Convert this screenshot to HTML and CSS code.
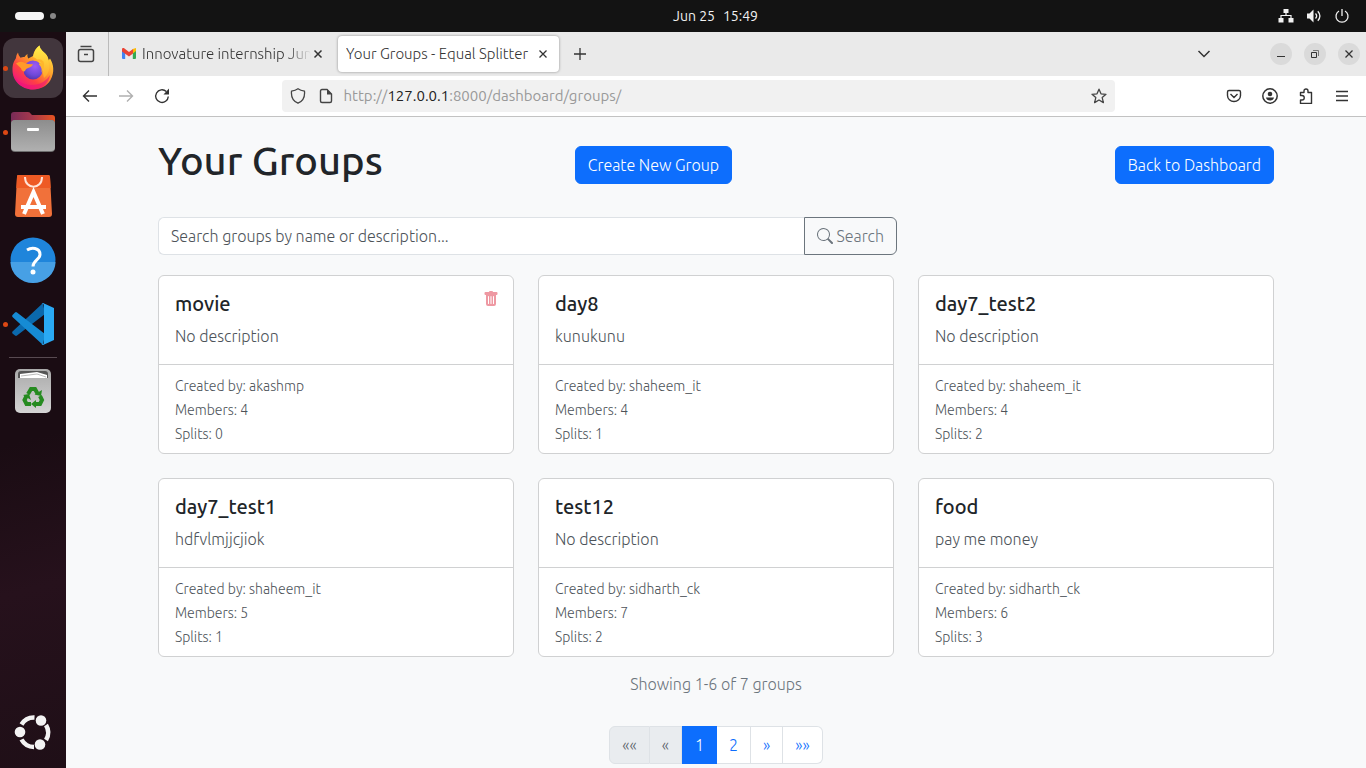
FILE: index.html
```html
<!DOCTYPE html>
<html lang="en">
<head>
<meta charset="utf-8">
<meta name="viewport" content="width=device-width, initial-scale=1">
<title>Your Groups - Equal Splitter</title>
<link rel="stylesheet" href="styles.css">
</head>
<body class="desktop">
<header class="topbar">
  <button class="workspaces" aria-label="Activities"><span class="pill"></span><span class="dot"></span></button>
  <button class="clock"><span>Jun 25</span><span>15:49</span></button>
  <button class="system" aria-label="System menu">
    <svg width="16" height="16" viewBox="0 0 16 16"><path d="M5.500 1h5v4h-5zM.5 10h5v4.500h-5zM10.500 10h5v4.500h-5z" fill="#f2f2f2"/><path d="M8 5v2.500M3 10V7.500h10V10" fill="none" stroke="#f2f2f2" stroke-width="1.200"/></svg>
    <svg width="16" height="16" viewBox="0 0 16 16"><path d="M1 5.500h2.500L7.500 1.500v13l-4-4H1z" fill="#f2f2f2"/><path d="M9.500 5.500q2.300 2.500 0 5M11.800 3.300q4.200 4.700 0 9.400" fill="none" stroke="#f2f2f2" stroke-width="1.300"/></svg>
    <svg width="16" height="16" viewBox="0 0 16 16"><path d="M5 3a6 6 0 1 0 6 0M8 1v7" fill="none" stroke="#f2f2f2" stroke-width="1.300"/></svg>
  </button>
</header>
<nav class="dock" aria-label="Dock">
  <button class="app app-active" aria-label="Firefox"><i class="running"></i>
    <svg width="48" height="48" viewBox="0 0 48 48">
      <defs>
        <linearGradient id="ff-body" x1=".85" y1=".1" x2=".2" y2=".95"><stop offset="0" stop-color="#ffe63f"/><stop offset=".4" stop-color="#ff9a2b"/><stop offset=".7" stop-color="#ff4143"/><stop offset="1" stop-color="#ef1385"/></linearGradient>
        <linearGradient id="ff-flame" x1=".5" y1="0" x2=".5" y2="1"><stop offset="0" stop-color="#fff14a"/><stop offset="1" stop-color="#ffa52a"/></linearGradient>
        <radialGradient id="ff-globe" cx=".6" cy=".3" r=".8"><stop offset="0" stop-color="#9f5cf5"/><stop offset=".6" stop-color="#6e48d8"/><stop offset="1" stop-color="#4b2fa0"/></radialGradient>
      </defs>
      <path d="M9 8.500q.2 3.200 2.500 5.200 1.900-.8 4-.6 1.300-2.200 3-3 -.6 2.300.7 4.300L24 12c1-5 3-8 6.500-10.500.5 4.500 4.500 6 7 9.500 1.500 2 1.800 3.500 2 5.500l1.500-2C44.500 20 46 28 41.500 36 38 42 31.500 45.500 24 45.500 12 45.500 3.500 36.500 3.500 26c0-5.500 1-8 3.300-11.500Q7 11 9 8.500z" fill="url(#ff-body)"/>
      <path d="M24 13c1-5 3-9 6.500-11.500.5 4.500 4.500 6 7 9.500 2.500 4 2 6 2.200 8 1.800 7-1 12-4.700 15-2-9-4-19-11-21z" fill="url(#ff-flame)"/>
      <circle cx="24" cy="26" r="9.500" fill="url(#ff-globe)"/>
      <path d="M7 19.500q4-3 8.500-.8 3 1.600 8.500 1.500c-.5 2-3 3-5.500 4-3 1-1.500 4-4.500 3q-1.500-.5-2-3z" fill="#ff9a2a"/>
      <path d="M4 28c2 8 9 13 18 13 10 0 16-5 19-10-1 9-9 14.500-17 14.500S4.500 39 4 28z" fill="#ef1278" opacity=".6"/>
      <path d="M24 17q5-2 9 2.500-3.500-1-3 1 3.500 3.500 2.500 8 4-5 2-11-3.500-4-10.500-.5z" fill="#ffb62c"/>
    </svg></button>
  <button class="app" aria-label="Files"><i class="running"></i>
    <svg width="48" height="48" viewBox="0 0 48 48">
      <defs><linearGradient id="folder" x1="0" x2="1"><stop offset="0" stop-color="#782b57"/><stop offset=".5" stop-color="#a8394c"/><stop offset="1" stop-color="#e95420"/></linearGradient><linearGradient id="drawer" x1="0" y1="0" x2="0" y2="1"><stop offset="0" stop-color="#8d8d8d"/><stop offset="1" stop-color="#b0b0b0"/></linearGradient></defs>
      <path d="M2 17V7q0-3 3-3h14q2 0 3 2l1 1h20q3 0 3 3v7H2z" fill="url(#folder)"/>
      <rect x="2" y="12" width="44" height="32" rx="4" fill="#6e6e6e"/><rect x="2" y="12" width="44" height="31" rx="4" fill="url(#drawer)"/><rect x="18" y="20" width="12" height="3" rx="1" fill="#fff"/>
    </svg></button>
  <button class="app" aria-label="App Center">
    <svg width="48" height="48" viewBox="0 0 48 48">
      <path d="M9 3h30q2 0 2 2l2 37q0 3-3 3H9q-3 0-3-3L8 5q0-2 1-2z" fill="#f1713a"/><path d="M9 3h30q2 0 2 2l.7 11H7.300L8 5q0-2 1-2z" fill="#ee5a24"/>
      <path d="M16 5c0 13 17 13 17 0" fill="none" stroke="#ffe4d8" stroke-width="2"/>
      <path d="M15 42l9.500-22L34 42M12 35h25" fill="none" stroke="#fff" stroke-width="4"/>
    </svg></button>
  <button class="app" aria-label="Help">
    <svg width="48" height="48" viewBox="0 0 48 48">
      <circle cx="24" cy="24" r="22.500" fill="#1f85db"/><path d="M1.500 26a22.500 21 0 0 0 45 0z" fill="#47a0e5"/>
      <path d="M18 14q4-2.500 8-1.500 5 1.200 5 6c0 5-7 6-7 12" fill="none" stroke="#fff" stroke-width="3"/><circle cx="24" cy="36" r="2.500" fill="#fff"/>
    </svg></button>
  <button class="app" aria-label="Visual Studio Code"><i class="running"></i>
    <svg width="48" height="48" viewBox="0 0 48 48">
      <path d="M34 3L3.500 31.500q-.8 1 0 2L6 35.500q1 .8 2 0L36 14z" fill="#0b69ad"/>
      <path d="M36 34L8 12.500q-1-.8-2 0L3.500 15q-.8 1 0 2L34 45z" fill="#168bd4"/>
      <path d="M34 3l11 5v32l-11 5q-1 0-1.500-1 2.500 1 2.500-1.500v-37q0-2.500-2.500-1.500z" fill="#2aa9f4"/>
    </svg></button>
  <hr class="dock-line">
  <button class="app" aria-label="Trash">
    <svg width="48" height="48" viewBox="0 0 48 48">
      <defs><linearGradient id="bin" x1="0" y1="0" x2="0" y2="1"><stop offset="0" stop-color="#aaa"/><stop offset="1" stop-color="#d4d4d4"/></linearGradient></defs>
      <rect x="6" y="2" width="36" height="44" rx="5" fill="url(#bin)"/>
      <path d="M9 11V7q0-3 3-3h24q3 0 3 3v4z" fill="#555"/><path d="M11 11V7l17-2 10 3v3z" fill="#fff"/><path d="M12 9l16-2 9 3" fill="none" stroke="#bbb"/>
      <g fill="none" stroke="#268b20" stroke-width="4"><path d="M19 27l3-5h4l2.500 4.500"/><path d="M31 29l2 4-2 4H26"/><path d="M22 37h-4.500l-2-4 2-4"/></g>
      <path d="M25.500 27.500l6.500 1.500 1-6zM27 33v8l-5-4zM14 28l6-1 2 6z" fill="#268b20"/>
    </svg></button>
  <button class="app app-last" aria-label="Show apps">
    <svg width="48" height="48" viewBox="0 0 48 48"><g fill="none" stroke="#f3f3f3" stroke-width="4.500"><path d="M12.500 16.500A14.500 14.500 0 0 1 25.500 9.500M37 17A14.500 14.500 0 0 1 37 32M25 39A14.500 14.500 0 0 1 12.500 31.500"/></g><g fill="#f3f3f3"><circle cx="32" cy="12.500" r="5.300"/><circle cx="11" cy="24" r="5.300"/><circle cx="31" cy="36.500" r="5.300"/></g></svg></button>
</nav>
<div class="browser">
  <div class="tabbar">
    <button class="tab-overview" aria-label="Recent browsing"><svg width="18" height="18" viewBox="0 0 18 18"><g fill="none" stroke="#444" stroke-width="1.500"><path d="M3.500 1.500h11"/><rect x="1.500" y="4.500" width="15" height="12" rx="2"/><path d="M7 9.500h4"/></g></svg></button>
    <div class="tab tab-back">
      <svg width="14" height="12" viewBox="0 0 14 12"><path d="M0 2v8q0 1 1 1h2.200V4.500L0 2z" fill="#4285f4"/><path d="M14 2v8q0 1-1 1h-2.200V4.500L14 2z" fill="#34a853"/><path d="M10.800 1L14 0v3l-3.200 2.500z" fill="#fbbc04"/><path d="M0 2.500V1.500C0 .2 1.300-.3 2.500.5L7 4 11 1v4.500L7 8.500 0 3.400z" fill="#ea4335"/></svg>
      <span class="tab-title">Innovature internship Jun</span>
      <button class="tab-close" aria-label="Close tab"><svg width="10" height="10" viewBox="0 0 10 10"><path d="M1.500 1.500l7 7M8.500 1.500l-7 7" stroke="#333" stroke-width="1.500"/></svg></button>
    </div>
    <div class="tab tab-current">
      <span class="tab-title">Your Groups - Equal Splitter</span>
      <button class="tab-close" aria-label="Close tab"><svg width="10" height="10" viewBox="0 0 10 10"><path d="M1.500 1.500l7 7M8.500 1.500l-7 7" stroke="#333" stroke-width="1.300"/></svg></button>
    </div>
    <button class="tab-new" aria-label="New tab"><svg width="14" height="14" viewBox="0 0 14 14"><path d="M7 1v12M1 7h12" stroke="#333" stroke-width="1.300"/></svg></button>
    <div class="window-controls">
      <button class="tab-list" aria-label="List all tabs"><svg width="14" height="14" viewBox="0 0 14 14"><path d="M1.500 4L7 9.500 12.500 4" fill="none" stroke="#333" stroke-width="1.500"/></svg></button>
      <button class="round" aria-label="Minimize"><svg width="10" height="10" viewBox="0 0 10 10"><path d="M1 7.500h8" stroke="#333"/></svg></button>
      <button class="round" aria-label="Restore"><svg width="10" height="10" viewBox="0 0 10 10"><path d="M1.500 3.500h5v5h-5z" fill="none" stroke="#333"/><path d="M3 1.500h5.500V7" fill="none" stroke="#777"/></svg></button>
      <button class="round" aria-label="Close"><svg width="10" height="10" viewBox="0 0 10 10"><path d="M1.500 1.500l7 7M8.500 1.500l-7 7" stroke="#333" stroke-width="1.300"/></svg></button>
    </div>
  </div>
  <div class="toolbar">
    <div class="tools">
      <button class="tool" aria-label="Back"><svg width="16" height="16" viewBox="0 0 16 16"><path d="M15 8H1.500M7 2.500L1.500 8 7 13.500" fill="none" stroke="#333" stroke-width="1.400"/></svg></button>
      <button class="tool" aria-label="Forward" disabled><svg width="16" height="16" viewBox="0 0 16 16"><path d="M1 8h13.500M9 2.500L14.500 8 9 13.500" fill="none" stroke="#b0b0b0" stroke-width="1.400"/></svg></button>
      <button class="tool" aria-label="Reload"><svg width="16" height="16" viewBox="0 0 16 16"><path d="M14.300 8.500A6.300 6.300 0 1 1 12.300 3.500" fill="none" stroke="#333" stroke-width="1.400"/><path d="M15 .5V6.500H9.500z" fill="#333"/></svg></button>
    </div>
    <div class="address">
      <button class="address-icon" aria-label="Tracking protection"><svg width="16" height="16" viewBox="0 0 16 16"><path d="M8 .8c2 1.400 4 2 6.500 2.400.5 5.300-1.500 10-6.500 12C3 13.200 1 8.500 1.500 3.200 4 2.800 6 2.200 8 .8z" fill="none" stroke="#444" stroke-width="1.300"/></svg></button>
      <button class="address-icon" aria-label="Site information"><svg width="16" height="16" viewBox="0 0 16 16"><path d="M4 1.500h5L13.500 6v7q0 1.500-1.500 1.500H4Q2.500 14.500 2.500 13V3Q2.500 1.500 4 1.500z" fill="none" stroke="#444" stroke-width="1.400"/><path d="M9 1v5.500h5z" fill="#444"/></svg></button>
      <div class="address-text" role="textbox" tabindex="0" aria-label="Address">http://<b>127.0.0.1</b>:8000/dashboard/groups/</div>
      <button class="address-icon" aria-label="Bookmark"><svg width="16" height="16" viewBox="0 0 16 16"><path d="M8 1.200l2 4.600 5 .5-3.800 3.300 1.200 5L8 12l-4.400 2.600 1.200-5L1 6.300l5-.5z" fill="none" stroke="#444" stroke-width="1.300" stroke-linejoin="round"/></svg></button>
    </div>
    <div class="tools">
      <button class="tool" aria-label="Pocket"><svg width="16" height="16" viewBox="0 0 16 16"><path d="M3 2.500h10q1.500 0 1.500 1.500v3.500a6.500 6 0 0 1-13 0V4Q1.500 2.500 3 2.500zM4.500 6L8 9.500 11.500 6" fill="none" stroke="#333" stroke-width="1.400"/></svg></button>
      <button class="tool" aria-label="Account"><svg width="16" height="16" viewBox="0 0 16 16"><circle cx="8" cy="8" r="7.200" fill="none" stroke="#333" stroke-width="1.500"/><circle cx="8" cy="6" r="2.300" fill="#333"/><path d="M4 9.500h8q-.5 3-4 3t-4-3z" fill="#333"/></svg></button>
      <button class="tool" aria-label="Extensions"><svg width="16" height="16" viewBox="0 0 16 16"><path d="M2.500 7.500V4.500H6V3a2 2 0 0 1 4 0v1.500h3.500v11h-11V12H4a2.200 2.200 0 0 0 0-4.500z" fill="none" stroke="#333" stroke-width="1.400" stroke-linejoin="round"/></svg></button>
      <button class="tool" aria-label="Menu"><svg width="16" height="16" viewBox="0 0 16 16"><path d="M2 3.500h12M2 8h12M2 12.500h12" stroke="#333" stroke-width="1.300"/></svg></button>
    </div>
  </div>
  <main class="page">
    <div class="container">
      <div class="page-head">
        <div class="page-head-main"><h1>Your Groups</h1><a class="btn" href="#create">Create New Group</a></div>
        <a class="btn" href="#dashboard">Back to Dashboard</a>
      </div>
      <form class="search">
        <input class="search-input" type="text" aria-label="Search groups" placeholder="Search groups by name or description...">
        <button class="search-button" type="button"><svg width="16" height="16" viewBox="0 0 16 16" fill="currentColor"><path d="M11.742 10.344a6.500 6.500 0 1 0-1.397 1.398h-.001q.044.06.098.115l3.850 3.850a1 1 0 0 0 1.415-1.414l-3.850-3.850a1 1 0 0 0-.115-.1zM12 6.500a5.500 5.500 0 1 1-11 0 5.500 5.500 0 0 1 11 0"/></svg>Search</button>
      </form>
      <div class="cards">
        <article class="card"><div class="card-body"><h2>movie</h2><p>No description</p><button class="delete" aria-label="Delete group"><svg width="16" height="16" viewBox="0 0 16 16" fill="currentColor"><path d="M2.500 1a1 1 0 0 0-1 1v1a1 1 0 0 0 1 1H3v9a2 2 0 0 0 2 2h6a2 2 0 0 0 2-2V4h.5a1 1 0 0 0 1-1V2a1 1 0 0 0-1-1H10a1 1 0 0 0-1-1H7a1 1 0 0 0-1 1zm3 4a.5.5 0 0 1 .5.5v7a.5.5 0 0 1-1 0v-7a.5.5 0 0 1 .5-.5M8 5a.5.5 0 0 1 .5.5v7a.5.5 0 0 1-1 0v-7A.5.5 0 0 1 8 5m3 .5v7a.5.5 0 0 1-1 0v-7a.5.5 0 0 1 1 0"/></svg></button></div><div class="card-foot"><p>Created by: akashmp</p><p>Members: 4</p><p>Splits: 0</p></div></article>
        <article class="card"><div class="card-body"><h2>day8</h2><p>kunukunu</p></div><div class="card-foot"><p>Created by: shaheem_it</p><p>Members: 4</p><p>Splits: 1</p></div></article>
        <article class="card"><div class="card-body"><h2>day7_test2</h2><p>No description</p></div><div class="card-foot"><p>Created by: shaheem_it</p><p>Members: 4</p><p>Splits: 2</p></div></article>
        <article class="card"><div class="card-body"><h2>day7_test1</h2><p>hdfvlmjjcjiok</p></div><div class="card-foot"><p>Created by: shaheem_it</p><p>Members: 5</p><p>Splits: 1</p></div></article>
        <article class="card"><div class="card-body"><h2>test12</h2><p>No description</p></div><div class="card-foot"><p>Created by: sidharth_ck</p><p>Members: 7</p><p>Splits: 2</p></div></article>
        <article class="card"><div class="card-body"><h2>food</h2><p>pay me money</p></div><div class="card-foot"><p>Created by: sidharth_ck</p><p>Members: 6</p><p>Splits: 3</p></div></article>
      </div>
      <p class="showing">Showing 1-6 of 7 groups</p>
      <nav class="pagination" aria-label="Pages">
        <span class="page-link page-off">««</span><span class="page-link page-off">«</span><a class="page-link page-on" href="#1" aria-current="page">1</a><a class="page-link" href="#2">2</a><a class="page-link" href="#2">»</a><a class="page-link" href="#2">»»</a>
      </nav>
    </div>
  </main>
</div>
</body>
</html>
```
FILE: styles.css
```css
*{box-sizing:border-box}
body{margin:0}
h1,h2,p{margin:0}
svg{display:block;flex:none}
button{font:inherit;color:inherit;background:none;border:0;padding:0;display:flex;align-items:center;justify-content:center}
a{text-decoration:none}

.desktop{
  display:grid;grid-template:32px minmax(0,1fr) / 66px minmax(0,1fr);
  height:100vh;overflow:hidden;
  font-family:Ubuntu,Roboto,"Noto Sans",sans-serif;font-size:16px;line-height:24px;font-weight:300;color:#212529;
}

/* top bar */
.topbar{grid-column:1 / -1;display:grid;grid-template-columns:1fr auto 1fr;align-items:center;padding:0 16px 0 15px;background:#131313;color:#f2f2f2;font-size:14px;font-weight:400}
.workspaces{gap:6px;justify-self:start}
.pill{width:29px;height:8px;border-radius:4px;background:#f6f6f6}
.dot{width:6px;height:6px;border-radius:3px;background:#888}
.clock{gap:8px;margin-left:66px}
.system{gap:12px;justify-self:end}

/* dock */
.dock{display:flex;flex-direction:column;align-items:center;gap:4px;padding:6px 3px;background:linear-gradient(165deg,#1a0c13 55%,#26111c 75%,#1f0f17)}
.app{position:relative;width:60px;height:60px;border-radius:12px}
.app-active{background:#42363d}
.running{position:absolute;left:0;top:28px;width:5px;height:5px;border-radius:3px;background:#dd4814}
.dock-line{width:48px;height:1px;margin:-1px 0;border:0;background:#584a51}
.app-last{margin-top:auto}

/* browser chrome */
.browser{display:flex;flex-direction:column;min-width:0}
.tabbar{display:flex;align-items:center;flex:none;height:44px;background:#eaeaea;color:#333;font-size:15px;font-weight:300}
.tab-overview{align-self:stretch;width:43px;padding-right:2px;border-right:1px solid #bbb}
.tab{display:flex;align-items:center;width:221px;height:36px}
.tab-title{flex:1;min-width:0;overflow:hidden;white-space:nowrap;color:#333}
.tab-close{width:14px;height:14px}
.tab-back{padding:0 5px 0 13px}
.tab-back .tab-title{margin-left:6px;-webkit-mask-image:linear-gradient(to left,transparent,#000 24px);mask-image:linear-gradient(to left,transparent,#000 24px)}
.tab-current{margin-left:8px;padding:0 9px 0 8px;border-radius:4px;background:#fff;box-shadow:0 0 3px #0006}
.tab-new{width:42px;height:36px}
.window-controls{display:flex;align-items:center;gap:12px;margin-left:auto;padding-right:6px}
.tab-list{width:36px;height:36px;margin-right:36px}
.round{width:22px;height:22px;border-radius:11px;background:#dadada}
.toolbar{display:flex;align-items:center;justify-content:space-between;flex:none;padding:4px 6px;border-bottom:1px solid #c2c2c2;background:#fff}
.tools{display:flex}
.tool{width:36px;height:32px}
.address{display:flex;align-items:center;gap:4px;flex:0 1 833px;height:32px;padding:0 4px;border-radius:4px;background:#f1f1f1}
.address-icon{width:24px;height:24px}
.address-text{flex:1;padding-left:2px;color:#999;font-size:15px;font-weight:400}
.address-text b{font-weight:400;color:#222}

/* page */
.page{flex:1;min-height:0;overflow:hidden;background:#f8f9fa}
.container{max-width:1140px;margin:0 auto;padding:20px 12px 0}
.page-head{display:flex;align-items:center;justify-content:space-between;height:56px;margin-bottom:24px}
.page-head-main{display:flex;align-items:center;justify-content:space-between;flex:0 1 574px}
h1{margin-bottom:8px;font-size:40px;line-height:48px;font-weight:500}
.btn{padding:6px 12px;border:1px solid #0d6efd;border-radius:6px;background:#0d6efd;color:#fff}
.search{display:flex;max-width:739px;margin-bottom:20px}
.search-input{flex:1;min-width:0;height:38px;padding:6px 12px;border:1px solid #dee2e6;border-right:0;border-radius:6px 0 0 6px;background:#fff;font:inherit;color:#212529}
.search-input::placeholder{color:#4d5359;opacity:1}
.search-button{gap:4px;padding:6px 12px;border:1px solid #6c757d;border-radius:0 6px 6px 0;color:#6c757d}
.cards{display:grid;grid-template-columns:repeat(3,minmax(0,1fr));gap:24px}
.card{border:1px solid #d0d1d2;border-radius:6px;background:#fff;color:#4d5359}
.card-body{position:relative;padding:16px}
.card h2{margin-bottom:8px;font-size:20px;line-height:24px;font-weight:500;color:#212529}
.delete{position:absolute;right:14px;top:15px;color:#ee98a2}
.card-foot{padding:9px 16px 7px;border-top:1px solid #d0d1d2;font-size:14px}
.showing{margin:15px 0 30px;text-align:center;color:#6c757d}
.pagination{display:flex;justify-content:center}
.page-link{padding:6px 12px;border:1px solid #dee2e6;border-left-width:0;background:#fff;color:#0d6efd}
.page-link:first-child{border-left-width:1px;border-radius:6px 0 0 6px}
.page-link:last-child{border-radius:0 6px 6px 0}
.page-off{background:#e9ecef;color:#5c636a}
.page-on{border-left-width:1px;background:#0d6efd;border-color:#0d6efd;color:#fff}
```
